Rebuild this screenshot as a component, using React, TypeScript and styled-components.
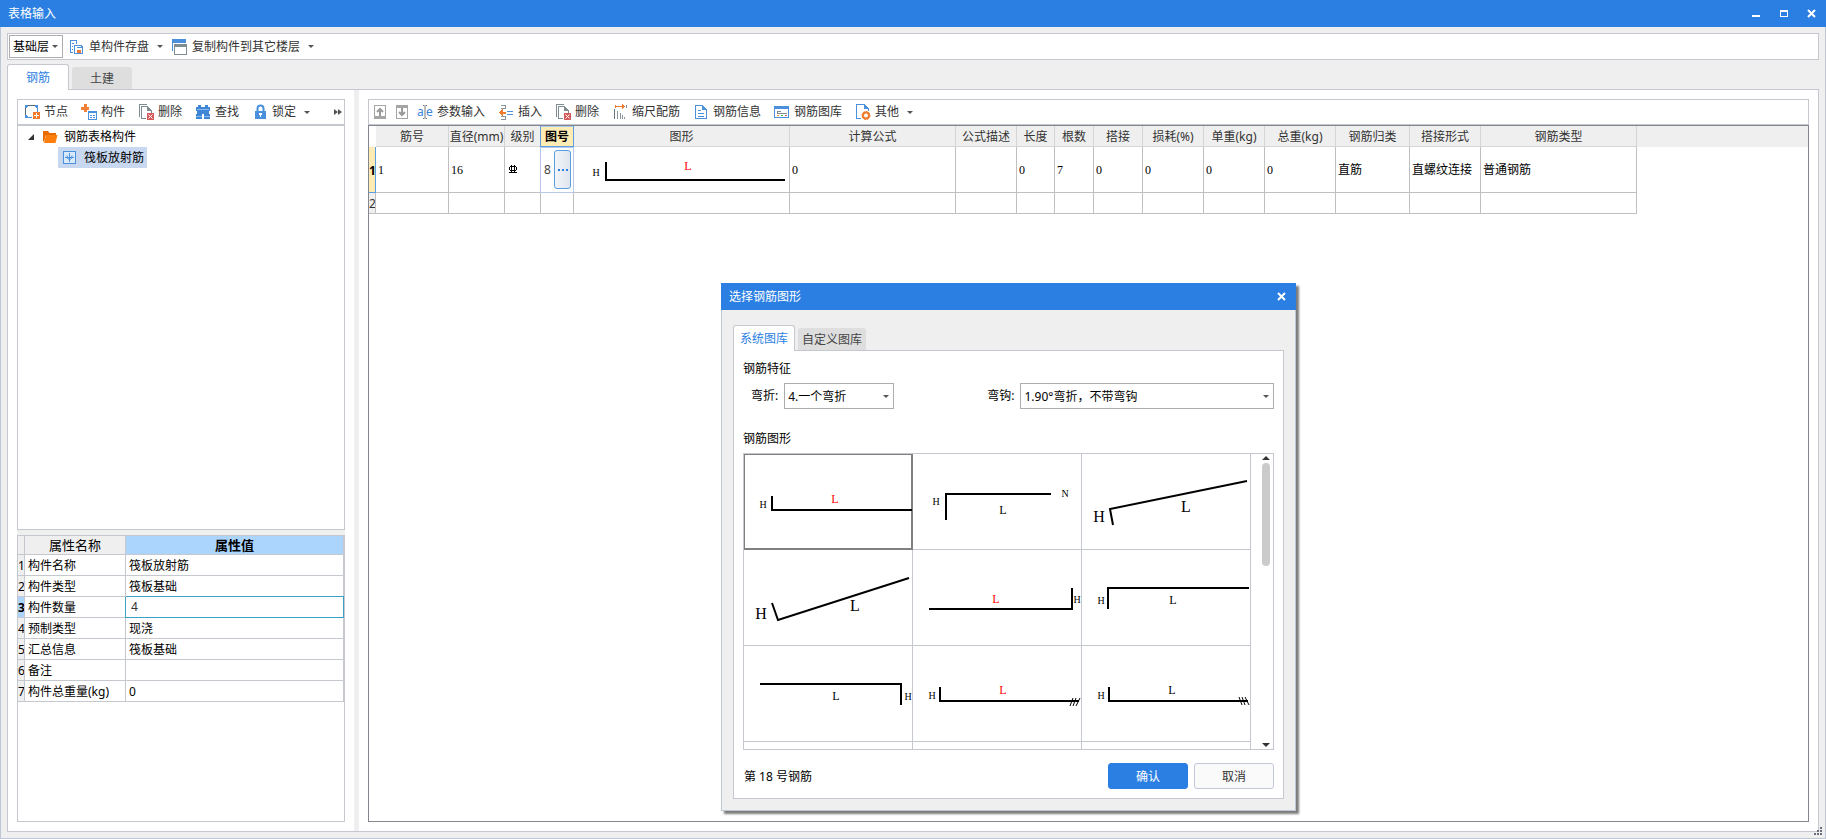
import React, { useState } from "react";
import styled, { createGlobalStyle, css } from "styled-components";

const blue = "#2c7fe2";
const line = "#c5c8cf";
const uiFont = `"Noto Sans", "Noto Sans CJK SC", sans-serif`;
const plotFont = `"Liberation Serif", "Noto Sans CJK SC", serif`;

const GlobalStyle = createGlobalStyle`
  *, *::before, *::after { box-sizing: border-box; }
  body { margin: 0; background: #efefef; }
  body, button, input, select, table { font-family: ${uiFont}; font-size: 12px; line-height: 16px; color: #333; }
  button { margin: 0; cursor: default; white-space: nowrap; }
  svg { display: block; flex: none; }
`;

const Window = styled.div`
  display: flex;
  flex-direction: column;
  min-height: 100vh;
  position: relative;
`;

const TitleBar = styled.header`
  display: flex;
  align-items: center;
  justify-content: space-between;
  height: 27px;
  flex: none;
  padding: 0 6px 0 8px;
  background: ${blue};
  color: #fff;
`;

const Title = styled.h1`
  margin: 0;
  font-size: 12px;
  line-height: 16px;
  font-weight: 400;
`;

const WindowButtons = styled.div`
  display: flex;
  gap: 12px;
`;

const WindowButton = styled.button`
  width: 16px;
  height: 16px;
  padding: 0;
  border: 0;
  background: none;
`;

const Client = styled.main`
  flex: 1;
  display: flex;
  flex-direction: column;
  padding: 6px;
  border: 1px solid #bfc6d6;
  border-top: 0;
`;

const Toolbar = styled.div<{ $lead: number; $h: number }>`
  display: flex;
  align-items: center;
  gap: 2px;
  flex: none;
  height: ${(p) => p.$h}px;
  padding-left: ${(p) => p.$lead}px;
  background: #fff;
  border: 1px solid ${line};
`;

const ToolButton = styled.button<{ $iconOnly?: boolean }>`
  display: flex;
  align-items: center;
  gap: 4px;
  height: 20px;
  padding: ${(p) => (p.$iconOnly ? "0 2px" : "0 7px 0 4px")};
  border: 0;
  border-radius: 3px;
  background: #fff;
  &:hover { background: #e8f1fc; }
`;

const MenuArrow = styled.span`
  width: 0;
  height: 0;
  margin: 0 -4px 0 4px;
  border: solid transparent;
  border-width: 3px 3px 0;
  border-top-color: #555;
  box-sizing: content-box;
`;

const More = styled.button`
  margin-left: auto;
  padding: 0 2px;
  border: 0;
  background: none;
`;

const SelectBox = styled.span<{ $w?: number; $h: number }>`
  display: flex;
  align-items: center;
  ${(p) => (p.$w ? css`width: ${p.$w}px;` : css`flex: 1;`)}
  height: ${(p) => p.$h}px;
  border: 1px solid #adadad;
  background: #fff;
  position: relative;
  &::after {
    content: "";
    position: absolute;
    right: 4px;
    border: solid transparent;
    border-width: 3px 3px 0;
    border-top-color: #555;
    pointer-events: none;
  }
`;

const Select = styled.select`
  appearance: none;
  width: 100%;
  height: 100%;
  padding: 1px 12px 0 3px;
  border: 0;
  background: none;
  color: #000;
  outline: 0;
`;

const Tabs = styled.div`
  display: flex;
  align-items: flex-end;
  gap: 3px;
  height: 25px;
  flex: none;
`;

const Tab = styled.button<{ $active?: boolean; $pad: number }>`
  padding: 1px ${(p) => p.$pad}px 0;
  height: 22px;
  border: 0;
  border-radius: 3px 3px 0 0;
  background: #dedede;
  color: #444;
  ${(p) =>
    p.$active &&
    css`
      height: 26px;
      margin-bottom: -1px;
      background: #fff;
      color: ${blue};
      border: 1px solid ${line};
      border-bottom: 0;
      position: relative;
      z-index: 1;
    `}
`;

const MainTabs = styled(Tabs)`
  margin-top: 4px;
`;

const Sheet = styled.section`
  flex: 1;
  display: flex;
  border: 1px solid ${line};
  background: #fff;
`;

const LeftPane = styled.div`
  width: 346px;
  flex: none;
  display: flex;
  flex-direction: column;
  padding: 9px;
`;

const RightPane = styled.div`
  flex: 1;
  min-width: 0;
  display: flex;
  flex-direction: column;
  padding: 9px;
`;

const Splitter = styled.div`
  width: 5px;
  flex: none;
  background: #efefef;
`;

const RowSplitter = styled.div`
  height: 5px;
  flex: none;
  background: #efefef;
`;

const Tree = styled.ul`
  flex: 405 1 0;
  margin: 0;
  padding: 0;
  list-style: none;
  border: 1px solid ${line};
`;

const TreeRow = styled.li<{ $level: number }>`
  display: flex;
  align-items: center;
  gap: 3px;
  height: 21px;
  padding-left: ${(p) => (p.$level ? 40 : 8)}px;
  color: #000;
`;

const TreeItem = styled.span<{ $selected?: boolean }>`
  display: flex;
  align-items: center;
  gap: 6px;
  height: 21px;
  padding: 0 3px 0 4px;
  background: ${(p) => (p.$selected ? "#c8d8f0" : "none")};
`;

const PropertyPanel = styled.div`
  flex: 287 1 0;
  border: 1px solid ${line};
`;

const PropertyTable = styled.table`
  width: 100%;
  table-layout: fixed;
  border-collapse: separate;
  border-spacing: 0;
  color: #000;
  th, td {
    height: 21px;
    padding: 2px 0 0 3px;
    border-right: 1px solid ${line};
    border-bottom: 1px solid ${line};
    font-weight: 400;
    text-align: left;
    white-space: nowrap;
  }
  thead th { height: 19px; padding: 1px 0 0; font-size: 13px; text-align: center; background: #efefef; }
  thead th:last-child { background: #acd5fe; font-weight: 700; }
`;

const PropIndex = styled.th<{ $current?: boolean }>`
  && {
    padding: 2px 0 0;
    background: ${(p) => (p.$current ? "#acd5fe" : "#efefef")};
    font-weight: ${(p) => (p.$current ? 700 : 400)};
    overflow: hidden;
  }
`;

const EditCell = styled.td`
  && {
    padding: 0;
    border-right-color: #3aa0c8;
    border-bottom-color: #3aa0c8;
    box-shadow: 0 -1px #3aa0c8, -1px 0 #3aa0c8;
  }
`;

const CellInput = styled.input`
  display: block;
  width: 100%;
  height: 18px;
  border: 0;
  padding: 0 5px;
  outline: 0;
  background: none;
`;

const GridPanel = styled.div`
  flex: 1;
  border: 1px solid #84868f;
  overflow: hidden;
`;

const DataTable = styled.table`
  width: 100%;
  table-layout: fixed;
  border-collapse: separate;
  border-spacing: 0;
  td {
    padding: 0 0 0 2px;
    border-right: 1px solid #c0c0c0;
    border-bottom: 1px solid #c0c0c0;
    color: #000;
    font-family: ${plotFont};
    white-space: nowrap;
  }
  td:last-child { border: 0; }
`;

const HeadCell = styled.th<{ $current?: boolean }>`
  height: 21px;
  padding: 2px 0 0;
  background: #efefef;
  border-right: 1px solid #d5d5d5;
  border-bottom: 1px solid #d5d5d5;
  font-weight: 400;
  white-space: nowrap;
  &:first-child { background: #fff; border-color: #fff; }
  &:last-child { border: 0; }
  ${(p) =>
    p.$current &&
    css`
      background: #ffecb4;
      color: #000;
      font-weight: 700;
      border-color: #5c9fe0;
      box-shadow: -1px 0 #5c9fe0, inset 0 1px #a9cdf2;
    `}
`;

const DataRow = styled.tr<{ $h: number }>`
  height: ${(p) => p.$h}px;
`;

const RowIndex = styled.th<{ $current?: boolean }>`
  padding: 2px 0 0;
  overflow: hidden;
  background: ${(p) => (p.$current ? "#ffecb4" : "#efefef")};
  font-weight: ${(p) => (p.$current ? 700 : 400)};
  color: ${(p) => (p.$current ? "#000" : "#333")};
  border-right: 1px solid ${(p) => (p.$current ? "#5c9fe0" : "#c0c0c0")};
  border-bottom: 1px solid ${(p) => (p.$current ? "#5c9fe0" : "#c0c0c0")};
`;

const CodeCell = styled.td`
  && {
    padding-left: 3px;
    font-family: ${uiFont};
    color: #444;
    border-color: #b9c8ea;
    box-shadow: -1px 0 #b9c8ea, inset 0 1px #b9c8ea;
  }
`;

const CodeEditor = styled.div`
  display: flex;
  align-items: center;
  justify-content: space-between;
  padding-right: 2px;
`;

const Ellipsis = styled.button`
  display: flex;
  align-items: center;
  justify-content: center;
  width: 17px;
  height: 39px;
  padding: 0;
  border: 1px solid #5c9fe0;
  border-radius: 3px;
  background: linear-gradient(90deg, #f3f5f9, #dfe5ef);
`;

const ShapeCell = styled.td`
  && { padding: 0; }
`;

const Dialog = styled.section`
  position: absolute;
  left: 721px;
  top: 283px;
  width: 575px;
  background: #efefef;
  box-shadow: 3px 3px 2px #7c7c7c;
`;

const DialogBody = styled.div`
  padding: 15px 11px 11px;
  border: 1px solid #bfc6d6;
  border-top: 0;
`;

const DialogPanel = styled.div`
  border: 1px solid ${line};
  background: #fff;
  padding: 10px 9px 9px;
  color: #000;
`;

const Heading = styled.h2`
  margin: 0 0 6px;
  font-size: 12px;
  line-height: 16px;
  font-weight: 400;
`;

const Fields = styled.div`
  display: flex;
  gap: 93px;
  margin: 0 0 22px 8px;
`;

const Field = styled.label<{ $grow?: boolean }>`
  display: flex;
  align-items: center;
  gap: 6px;
  flex: ${(p) => (p.$grow ? "1" : "none")};
`;

const Gallery = styled.div`
  display: flex;
  height: 297px;
  border: 1px solid ${line};
  overflow: hidden;
`;

const ShapeGrid = styled.div`
  flex: 1;
  display: grid;
  grid-template-columns: repeat(3, 1fr);
  grid-auto-rows: 96px;
`;

const ShapeTile = styled.button<{ $selected?: boolean }>`
  padding: 0;
  border: solid ${(p) => (p.$selected ? "#808080" : line)};
  border-width: 0 1px 1px 0;
  background: #fff;
  overflow: hidden;
  box-shadow: ${(p) => (p.$selected ? "inset 0 0 0 1px #808080" : "none")};
`;

const ScrollTrack = styled.div`
  width: 22px;
  display: flex;
  flex-direction: column;
  align-items: center;
  padding: 2px 0 2px 8px;
`;

const ScrollThumb = styled.div`
  width: 8px;
  height: 103px;
  margin: 3px 0 auto;
  border-radius: 4px;
  background: #cbcbcb;
`;

const ScrollArrow = styled.div<{ $down?: boolean }>`
  border: solid transparent;
  border-width: ${(p) => (p.$down ? "4px 4px 0" : "0 4px 4px")};
  border-top-color: ${(p) => (p.$down ? "#333" : "transparent")};
  border-bottom-color: ${(p) => (p.$down ? "transparent" : "#333")};
`;

const Footer = styled.div`
  display: flex;
  align-items: center;
  gap: 6px;
  margin-top: 13px;
`;

const Status = styled.span`
  flex: 1;
  padding: 1px 0 0 1px;
`;

const DialogButton = styled.button<{ $primary?: boolean }>`
  width: 80px;
  height: 26px;
  padding: 1px 0 0;
  border: 1px solid ${(p) => (p.$primary ? blue : "#c2c8da")};
  border-radius: 3px;
  background: ${(p) => (p.$primary ? blue : "#fafafa")};
  color: ${(p) => (p.$primary ? "#fff" : "#333")};
`;

const Grip = styled.div`
  position: absolute;
  right: 4px;
  bottom: 4px;
`;

/* Icons, all drawn on a 16 x 16 grid */

const Icon = ({ children }: { children: React.ReactNode }) => (
  <svg width="16" height="16" viewBox="0 0 16 16" fill="none" aria-hidden="true" shapeRendering="crispEdges">
    {children}
  </svg>
);

const b = "#4a90dd";
const grey = "#7f8c92";

const SaveIcon = () => (
  <Icon>
    <path d="M7.500 5V1.500H1.500V13.500H4" stroke={b} />
    <path d="M3 4.500H5M3 7.500H4M3 10.500H4" stroke={b} />
    <path d="M5.500 6.500H12.500L13.500 7.500V14.500H5.500Z" stroke={b} fill="#fff" />
    <path d="M8 7.500V8.500H12V7" stroke={b} />
    <path d="M8 11H12V14H8Z" fill="#f07a2d" />
  </Icon>
);

const CopyIcon = () => (
  <Icon>
    <path d="M0.500 11.500V0.500H13.500V4" stroke={b} />
    <path d="M0 0H14V4H0Z" fill={b} />
    <path d="M2.500 5.500H14.500V15.500H2.500Z" fill="#fff" stroke={grey} />
    <path d="M2 5H15V8H2Z" fill={grey} />
  </Icon>
);

const NodeIcon = () => (
  <Icon>
    <path d="M3 1.500H12M1.500 3V12" stroke="#5a6b78" />
    <path d="M13.500 3V8M4 13.500H8" stroke={b} />
    <path d="M1 1H4V3H3V4H1ZM11 1H14V4H12V3H11ZM1 11H3V12H4V14H1Z" fill={b} />
    <path d="M9 8H16V15H9Z" fill="#f07a2d" />
    <path d="M12.500 9V14M10 11.500H15" stroke="#fff" />
  </Icon>
);

const PartIcon = () => (
  <Icon>
    <path d="M3 0H6V3H8V6H6V8H3V6H0V3H3Z" fill="#f0803a" />
    <path d="M7.500 7.500H15.500V15.500H7.500Z" stroke={b} fill="#fff" />
    <path d="M7 7H16V9H7Z" fill={b} />
    <path d="M9 11.500H11M12 11.500H14M9 13.500H11M12 13.500H14" stroke={b} />
  </Icon>
);

const DeleteIcon = () => (
  <Icon>
    <path d="M1.500 13V0.500H9" stroke={grey} />
    <path d="M8 14.500H3.500V2.500H9.500L13.500 6.500V9" stroke={grey} />
    <path d="M9 2V7H14Z" fill={grey} />
    <path d="M9 9H16V16H9Z" fill="#d45b5b" />
    <path d="M10.500 10.500L14.500 14.500M14.500 10.500L10.500 14.500" stroke="#fff" shapeRendering="auto" />
  </Icon>
);

const FindIcon = () => (
  <Icon>
    <path d="M3 1H6V3H10V1H13V3H15V7H14V10H15V15H9V10H7V15H1V10H2V7H1V3H3Z" fill="#3f87d6" />
    <path d="M2 5.500H14M1 12.500H7M9 12.500H15" stroke="#8ab9ee" />
  </Icon>
);

const LockIcon = () => (
  <Icon>
    <path d="M5.500 7V4.500a3 3 0 0 1 6 0V7" stroke={b} strokeWidth="2" shapeRendering="auto" />
    <path d="M3 7H14V15H3Z" fill={b} />
    <path d="M7 9H10V11H9V13H8V11H7Z" fill="#fff" />
  </Icon>
);

const FolderIcon = () => (
  <svg width="15" height="14" viewBox="0 0 15 14" aria-hidden="true">
    <path d="M0 1H5L6.500 3H13V5H3L1 12L0 11Z" fill="#e86c00" />
    <path d="M3 5H14.500L12.500 13H1Z" fill="#ff7f0e" />
  </svg>
);

const MemberIcon = () => (
  <Icon>
    <path d="M1.500 1.500H13.500V13.500H1.500Z" stroke={b} fill="#d9eafc" />
    <path d="M7.500 3V12M3 7.500H12" stroke={b} />
    <path d="M5 5.500Q5 9.500 7.500 9.500T10 5.500" stroke={b} shapeRendering="auto" />
  </Icon>
);

const MoveIcon = ({ down }: { down?: boolean }) => (
  <Icon>
    <path d="M3.500 1.500H14.500V14.500H3.500Z" stroke="#a5a5a5" />
    <path d={down ? "M3 1H15V4H3Z" : "M3 12H15V15H3Z"} fill="#a5a5a5" />
    <path d={down ? "M9 4V11M6 8L9 11L12 8" : "M9 12V5M6 8L9 5L12 8"} stroke="#9a9a9a" strokeWidth="2" shapeRendering="auto" />
  </Icon>
);

const ParamIcon = () => (
  <svg width="16" height="16" viewBox="0 0 16 16" fill="none" aria-hidden="true">
    <text x="0" y="12" fontSize="12" fontFamily="Noto Sans, sans-serif" fill="#3a86d8">a</text>
    <text x="9" y="12" fontSize="12" fontFamily="Noto Sans, sans-serif" fill="#3a86d8">e</text>
    <path d="M6 1.500H7.500M8.500 1.500H10M8 2V14M6 14.500H7.500M8.500 14.500H10" stroke="#777" />
  </svg>
);

const InsertIcon = () => (
  <Icon>
    <path d="M3 1.500H7.500V4.500H3M3 15.500H7.500V12.500H3" stroke="#8a969c" />
    <path d="M5 5L1 8.500L5 12V9.500H8V7.500H5Z" fill="#f07a2d" />
    <path d="M9 7.500H15M9 10.500H15" stroke={b} />
  </Icon>
);

const ScaleIcon = () => (
  <Icon>
    <path d="M3.500 1V4M4 2.500H12" stroke="#f07a2d" />
    <path d="M10 0L13 2.500L10 5Z" fill="#f07a2d" />
    <path d="M2.500 5V15" stroke="#6a747c" />
    <path d="M5.500 7V15M8.500 9V15M10.500 11V15M12.500 13V15M14.500 1V4" stroke="#8a969c" />
  </Icon>
);

const DocIcon = () => (
  <Icon>
    <path d="M2.500 1.500H9.500L13.500 5.500V14.500H2.500Z" stroke={b} />
    <path d="M9 1V6H14Z" fill={b} />
    <path d="M5 6.500H8M5 9.500H11M5 12.500H11" stroke={b} />
  </Icon>
);

const LibraryIcon = () => (
  <Icon>
    <path d="M0.500 2.500H14.500V13.500H0.500Z" stroke={b} />
    <path d="M0 2H15V5H0Z" fill={b} />
    <path d="M3.500 7V10M3 7.500H7M3 9.500H13" stroke={grey} />
    <path d="M3 11.500H5" stroke="#e8a020" />
    <path d="M7 11.500H9" stroke="#4fb36a" />
    <path d="M11 11.500H13" stroke="#d45b5b" />
  </Icon>
);

const OtherIcon = () => (
  <Icon>
    <path d="M6 14.500H1.500V0.500H9.500L13.500 4.500V7" stroke={b} />
    <path d="M9 0V5H14Z" fill={b} />
    <circle cx="11" cy="11.500" r="3" stroke="#f07a2d" strokeWidth="2" shapeRendering="auto" />
    <circle cx="11" cy="11.500" r="4" stroke="#f07a2d" strokeDasharray="2 1" shapeRendering="auto" />
  </Icon>
);

const GradeIcon = () => (
  <svg width="12" height="10" viewBox="0 0 12 10" fill="#000" role="img" aria-label="三级钢" shapeRendering="crispEdges">
    <path d="M3 1H9V2H3ZM2 2H3V5H2ZM9 2H10V5H9ZM3 5H9V6H3ZM4 0H5V8H4ZM7 0H8V8H7ZM2 7H10V8H2Z" />
  </svg>
);

/* Bar shapes */

type Label = { t: string; x: number; y: number; red?: boolean; big?: boolean };
type Shape = { d: string; labels: Label[]; hatch?: string; aa?: boolean };

const labelSize = (l: Label) => (l.big ? 16 : l.t === "L" ? 12 : 10);

const ShapeDrawing = ({ shape, w, h }: { shape: Shape; w: number; h: number }) => (
  <svg width={w} height={h} viewBox={`0 0 ${w} ${h}`} fill="none">
    <path d={shape.d} stroke="#000" strokeWidth="2" shapeRendering={shape.aa ? "auto" : "crispEdges"} />
    {shape.hatch && <path d={shape.hatch} stroke="#000" />}
    {shape.labels.map((l) => (
      <text
        key={l.t + l.x}
        x={l.x}
        y={l.y}
        textAnchor="middle"
        fontFamily={plotFont}
        fontSize={labelSize(l)}
        fill={l.red ? "#f00" : "#000"}
      >
        {l.t}
      </text>
    ))}
  </svg>
);

const rowShape: Shape = {
  d: "M32 15V33H211",
  labels: [{ t: "H", x: 22, y: 29 }, { t: "L", x: 114, y: 23, red: true }],
};

const shapes: Shape[] = [
  { d: "M28 42V56H168", labels: [{ t: "H", x: 19, y: 54 }, { t: "L", x: 91, y: 49, red: true }] },
  { d: "M33 66V40H138", labels: [{ t: "H", x: 23, y: 51 }, { t: "L", x: 90, y: 60 }, { t: "N", x: 152, y: 43 }] },
  { d: "M31 71L28 55L165 27", aa: true, labels: [{ t: "H", x: 17, y: 68, big: true }, { t: "L", x: 104, y: 58, big: true }] },
  { d: "M28 53L34 70L165 28", aa: true, labels: [{ t: "H", x: 17, y: 69, big: true }, { t: "L", x: 111, y: 61, big: true }] },
  { d: "M16 59H159V38", labels: [{ t: "L", x: 83, y: 53, red: true }, { t: "H", x: 164, y: 53 }] },
  { d: "M26 59V38H167", labels: [{ t: "H", x: 19, y: 54 }, { t: "L", x: 91, y: 54 }] },
  { d: "M16 38H157V59", labels: [{ t: "L", x: 92, y: 54 }, { t: "H", x: 164, y: 54 }] },
  {
    d: "M27 41V55H166",
    labels: [{ t: "H", x: 19, y: 53 }, { t: "L", x: 90, y: 48, red: true }],
    hatch: "M157 60L160 52M160 60L163 52M163 60L167 52",
  },
  {
    d: "M27 41V55H166",
    labels: [{ t: "H", x: 19, y: 53 }, { t: "L", x: 90, y: 48 }],
    hatch: "M157 51L160 59M160 51L163 59M163 51L167 59",
  },
];

const columns: [string, number][] = [
  ["筋号", 73], ["直径(mm)", 56], ["级别", 36], ["图号", 33], ["图形", 216], ["计算公式", 166],
  ["公式描述", 61], ["长度", 38], ["根数", 39], ["搭接", 49], ["损耗(%)", 61], ["单重(kg)", 61],
  ["总重(kg)", 71], ["钢筋归类", 74], ["搭接形式", 71], ["钢筋类型", 156],
];

const restOfRow = ["0", "", "0", "7", "0", "0", "0", "0", "直筋", "直螺纹连接", "普通钢筋"];

const properties = [
  ["构件名称", "筏板放射筋"], ["构件类型", "筏板基础"], ["构件数量", "4"], ["预制类型", "现浇"],
  ["汇总信息", "筏板基础"], ["备注", ""], ["构件总重量(kg)", "0"],
];

const CloseGlyph = () => (
  <svg width="16" height="16" viewBox="0 0 16 16" stroke="#fff" strokeWidth="2">
    <path d="M4 4L11 11M11 4L4 11" />
  </svg>
);

export default function App() {
  const [picked, setPicked] = useState(0);
  return (
    <>
      <GlobalStyle />
      <Window>
        <TitleBar>
          <Title>表格输入</Title>
          <WindowButtons>
            <WindowButton aria-label="最小化">
              <svg width="16" height="16"><path d="M4 9H12V11H4Z" fill="#fff" /></svg>
            </WindowButton>
            <WindowButton aria-label="最大化">
              <svg width="16" height="16"><path d="M4 4H12V11H4ZM5 6V10H11V6Z" fill="#fff" fillRule="evenodd" /></svg>
            </WindowButton>
            <WindowButton aria-label="关闭"><CloseGlyph /></WindowButton>
          </WindowButtons>
        </TitleBar>

        <Client>
          <Toolbar $lead={1} $h={27}>
            <SelectBox $w={54} $h={23}>
              <Select aria-label="楼层"><option>基础层</option></Select>
            </SelectBox>
            <ToolButton><SaveIcon />单构件存盘<MenuArrow /></ToolButton>
            <ToolButton><CopyIcon />复制构件到其它楼层<MenuArrow /></ToolButton>
          </Toolbar>

          <MainTabs role="tablist">
            <Tab role="tab" aria-selected="true" $active $pad={18}>钢筋</Tab>
            <Tab role="tab" aria-selected="false" $pad={18}>土建</Tab>
          </MainTabs>

          <Sheet>
            <LeftPane>
              <Toolbar $lead={2} $h={26}>
                <ToolButton><NodeIcon />节点</ToolButton>
                <ToolButton><PartIcon />构件</ToolButton>
                <ToolButton><DeleteIcon />删除</ToolButton>
                <ToolButton><FindIcon />查找</ToolButton>
                <ToolButton><LockIcon />锁定<MenuArrow /></ToolButton>
                <More aria-label="更多">
                  <svg width="8" height="6" fill="#555"><path d="M0 0L4 3L0 6ZM4 0L8 3L4 6Z" /></svg>
                </More>
              </Toolbar>
              <Tree>
                <TreeRow $level={0}>
                  <svg width="10" height="8" aria-hidden="true"><path d="M2 7H8V1Z" fill="#333" /></svg>
                  <TreeItem><FolderIcon />钢筋表格构件</TreeItem>
                </TreeRow>
                <TreeRow $level={1}>
                  <TreeItem $selected><MemberIcon />筏板放射筋</TreeItem>
                </TreeRow>
              </Tree>
              <RowSplitter />
              <PropertyPanel>
                <PropertyTable>
                  <colgroup><col width="7" /><col width="101" /><col /></colgroup>
                  <thead>
                    <tr><th></th><th>属性名称</th><th>属性值</th></tr>
                  </thead>
                  <tbody>
                    {properties.map(([name, value], i) => (
                      <tr key={name}>
                        <PropIndex scope="row" $current={i === 2}>{i + 1}</PropIndex>
                        <td>{name}</td>
                        {i === 2 ? (
                          <EditCell><CellInput aria-label={name} defaultValue={value} /></EditCell>
                        ) : (
                          <td>{value}</td>
                        )}
                      </tr>
                    ))}
                  </tbody>
                </PropertyTable>
              </PropertyPanel>
            </LeftPane>
            <Splitter />
            <RightPane>
              <Toolbar $lead={0} $h={26}>
                <ToolButton $iconOnly aria-label="上移"><MoveIcon /></ToolButton>
                <ToolButton $iconOnly aria-label="下移"><MoveIcon down /></ToolButton>
                <ToolButton><ParamIcon />参数输入</ToolButton>
                <ToolButton><InsertIcon />插入</ToolButton>
                <ToolButton><DeleteIcon />删除</ToolButton>
                <ToolButton><ScaleIcon />缩尺配筋</ToolButton>
                <ToolButton><DocIcon />钢筋信息</ToolButton>
                <ToolButton><LibraryIcon />钢筋图库</ToolButton>
                <ToolButton><OtherIcon />其他<MenuArrow /></ToolButton>
              </Toolbar>
              <GridPanel>
                <DataTable>
                  <colgroup>
                    <col width="7" />
                    {columns.map(([name, width]) => <col key={name} width={width} />)}
                    <col />
                  </colgroup>
                  <thead>
                    <tr>
                      <HeadCell />
                      {columns.map(([name]) => <HeadCell key={name} $current={name === "图号"}>{name}</HeadCell>)}
                      <HeadCell />
                    </tr>
                  </thead>
                  <tbody>
                    <DataRow $h={46}>
                      <RowIndex scope="row" $current>1</RowIndex>
                      <td>1</td>
                      <td>16</td>
                      <td><GradeIcon /></td>
                      <CodeCell>
                        <CodeEditor>8
                          <Ellipsis aria-label="选择图形">
                            <svg width="10" height="2" fill="#2c7fe2"><path d="M0 0H2V2H0ZM4 0H6V2H4ZM8 0H10V2H8Z" /></svg>
                          </Ellipsis>
                        </CodeEditor>
                      </CodeCell>
                      <ShapeCell><ShapeDrawing shape={rowShape} w={215} h={45} /></ShapeCell>
                      {restOfRow.map((v, i) => <td key={i}>{v}</td>)}
                      <td />
                    </DataRow>
                    <DataRow $h={21}>
                      <RowIndex scope="row">2</RowIndex>
                      {columns.map(([name]) => <td key={name} />)}
                      <td />
                    </DataRow>
                  </tbody>
                </DataTable>
              </GridPanel>
            </RightPane>
          </Sheet>
        </Client>

        <Grip>
          <svg width="8" height="8" fill="#6b6f7c">
            <path d="M6 0H8V2H6ZM3 3H5V5H3ZM6 3H8V5H6ZM0 6H2V8H0ZM3 6H5V8H3ZM6 6H8V8H6Z" />
          </svg>
        </Grip>

        <Dialog role="dialog" aria-label="选择钢筋图形">
          <TitleBar>
            <Title>选择钢筋图形</Title>
            <WindowButton aria-label="关闭"><CloseGlyph /></WindowButton>
          </TitleBar>
          <DialogBody>
            <Tabs role="tablist">
              <Tab role="tab" aria-selected="true" $active $pad={6}>系统图库</Tab>
              <Tab role="tab" aria-selected="false" $pad={4}>自定义图库</Tab>
            </Tabs>
            <DialogPanel>
              <Heading>钢筋特征</Heading>
              <Fields>
                <Field>弯折:
                  <SelectBox $w={110} $h={26}><Select><option>4.一个弯折</option></Select></SelectBox>
                </Field>
                <Field $grow>弯钩:
                  <SelectBox $h={26}><Select><option>1.90°弯折，不带弯钩</option></Select></SelectBox>
                </Field>
              </Fields>
              <Heading>钢筋图形</Heading>
              <Gallery>
                <ShapeGrid>
                  {shapes.map((s, i) => (
                    <ShapeTile key={i} $selected={i === picked} aria-pressed={i === picked} onClick={() => setPicked(i)}>
                      <ShapeDrawing shape={s} w={168} h={95} />
                    </ShapeTile>
                  ))}
                  {[9, 10, 11].map((i) => <ShapeTile key={i} aria-label="空" />)}
                </ShapeGrid>
                <ScrollTrack>
                  <ScrollArrow />
                  <ScrollThumb />
                  <ScrollArrow $down />
                </ScrollTrack>
              </Gallery>
              <Footer>
                <Status>第 18 号钢筋</Status>
                <DialogButton $primary>确认</DialogButton>
                <DialogButton>取消</DialogButton>
              </Footer>
            </DialogPanel>
          </DialogBody>
        </Dialog>
      </Window>
    </>
  );
}
